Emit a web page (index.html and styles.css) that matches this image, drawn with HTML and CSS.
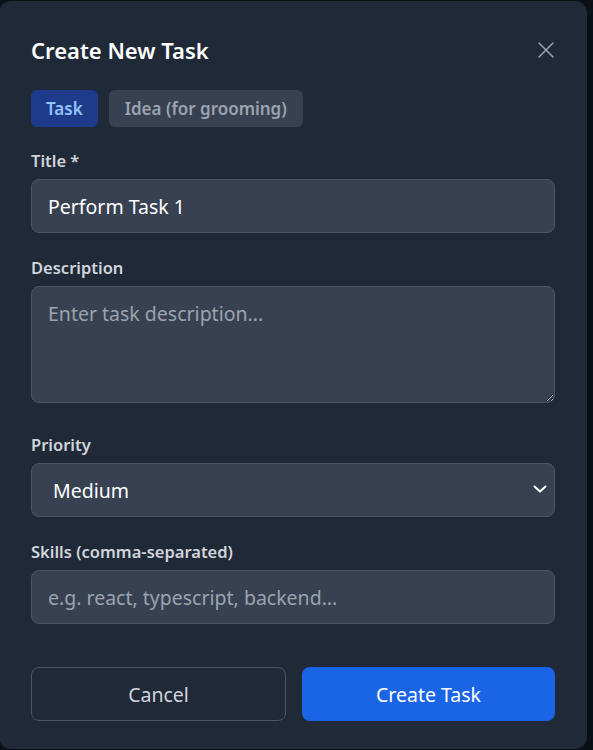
FILE: index.html
```html
<!DOCTYPE html>
<html lang="en">
<head>
    <meta charset="UTF-8">
    <meta name="viewport" content="width=device-width, initial-scale=1.0">
    <title>Create New Task</title>
    <link rel="stylesheet" href="styles.css">
</head>
<body>
    <div class="modal">
        <div class="modal-header">
            <h2 class="modal-title">Create New Task</h2>
            <button class="close-btn" aria-label="Close">
                <svg width="18" height="18" viewBox="0 0 18 18" fill="none" stroke="currentColor" stroke-width="1.5" stroke-linecap="round">
                    <path d="M2 2L16 16M16 2L2 16"/>
                </svg>
            </button>
        </div>

        <div class="type-tabs">
            <button class="tab active">Task</button>
            <button class="tab">Idea (for grooming)</button>
        </div>

        <div class="field field-first">
            <label class="label" for="title">Title *</label>
            <input type="text" class="input-field" id="title" value="Perform Task 1">
        </div>

        <div class="field field-desc">
            <label class="label" for="description">Description</label>
            <textarea class="input-field textarea" id="description" placeholder="Enter task description..."></textarea>
        </div>

        <div class="field">
            <label class="label" for="priority">Priority</label>
            <div class="select-wrap">
                <select class="input-field select" id="priority">
                    <option>Low</option>
                    <option selected>Medium</option>
                    <option>High</option>
                </select>
                <svg class="chevron" width="14" height="8" viewBox="0 0 14 8" fill="none" stroke="currentColor" stroke-width="2" stroke-linecap="round" stroke-linejoin="round">
                    <path d="M1.5 1.5L7 6.5L12.5 1.5"/>
                </svg>
            </div>
        </div>

        <div class="field">
            <label class="label" for="skills">Skills (comma-separated)</label>
            <input type="text" class="input-field" id="skills" placeholder="e.g. react, typescript, backend...">
        </div>

        <div class="actions">
            <button class="btn btn-cancel">Cancel</button>
            <button class="btn btn-primary">Create Task</button>
        </div>
    </div>
</body>
</html>
```

FILE: styles.css
```css
html, body {
    height: 100%;
}
body {
    margin: 0;
    background: #0b0f16;
    font-family: "Noto Sans", "Open Sans", sans-serif;
    overflow: hidden;
}
.modal {
    box-sizing: border-box;
    width: 588px;
    height: 748px;
    margin: 1px 0 0 -1px;
    padding: 33px 32px 0 32px;
    background: #1f2937;
    border-radius: 12px;
}
.modal-header {
    display: flex;
    justify-content: space-between;
    align-items: center;
    height: 32px;
}
.modal-title {
    margin: 0;
    font-size: 22px;
    font-weight: 600;
    color: #ffffff;
}
.close-btn {
    background: none;
    border: none;
    padding: 0;
    color: #9ca3af;
    display: flex;
    cursor: pointer;
}
.type-tabs {
    display: flex;
    gap: 11px;
    margin-top: 24px;
}
.tab {
    height: 37px;
    padding: 0 16px;
    border: none;
    border-radius: 6px;
    background: #374151;
    color: #9ca3af;
    font-family: inherit;
    font-size: 17px;
    font-weight: 600;
    cursor: pointer;
}
.tab.active {
    padding: 0 15px;
    background: #1e3a8a;
    color: #93c5fd;
}
.field {
    margin-top: 24px;
}
.field-first {
    margin-top: 23px;
}
.field-desc {
    padding-bottom: 7px;
}
.label {
    display: block;
    margin-bottom: 7px;
    font-size: 16.5px;
    font-weight: 600;
    color: #d1d5db;
    line-height: 22px;
}
.input-field {
    box-sizing: border-box;
    display: block;
    width: 100%;
    height: 54px;
    padding: 0 16px;
    background: #374151;
    border: 1px solid #4b5563;
    border-radius: 8px;
    color: #ffffff;
    font-family: inherit;
    font-size: 19.5px;
    outline: none;
}
.input-field::placeholder {
    color: #9ca3af;
}
.textarea {
    height: 117px;
    padding: 13px 16px;
    resize: vertical;
}
.select-wrap {
    position: relative;
}
.select {
    appearance: none;
    padding-left: 21px;
}
.chevron {
    position: absolute;
    right: 8px;
    top: 22px;
    color: #ffffff;
    pointer-events: none;
}
.actions {
    display: flex;
    gap: 16px;
    margin-top: 43px;
}
.btn {
    flex: 1;
    height: 54px;
    border-radius: 8px;
    font-family: inherit;
    font-size: 19.5px;
    cursor: pointer;
}
.btn-cancel {
    background: transparent;
    border: 1px solid #4b5563;
    color: #d1d5db;
}
.btn-primary {
    background: #1a64e6;
    border: none;
    color: #ffffff;
}
```
